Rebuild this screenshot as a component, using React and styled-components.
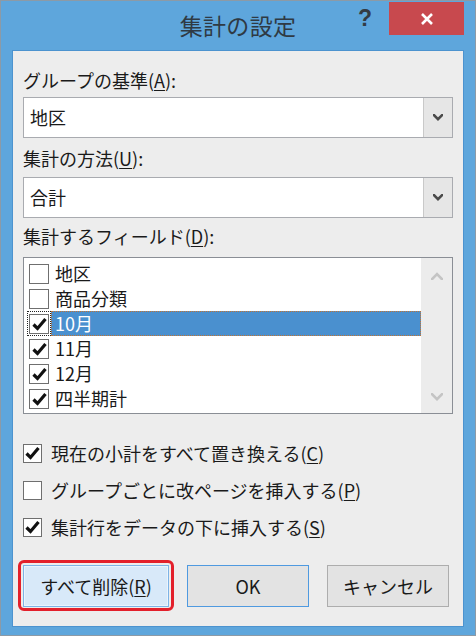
import React from 'react';
import styled, { createGlobalStyle } from 'styled-components';

const GlobalStyle = createGlobalStyle`
  html, body {
    margin: 0;
    padding: 0;
    background: #ffffff;
  }
  body {
    font-family: "Noto Sans CJK JP", "Noto Sans", sans-serif;
    color: #1a1a1a;
  }
`;

const fields = [
	{ name: '地区', checked: false },
	{ name: '商品分類', checked: false },
	{ name: '10月', checked: true, selected: true },
	{ name: '11月', checked: true },
	{ name: '12月', checked: true },
	{ name: '四半期計', checked: true },
];

const options = [
	{ text: '現在の小計をすべて置き換える', key: 'C', checked: true },
	{ text: 'グループごとに改ページを挿入する', key: 'P', checked: false },
	{ text: '集計行をデータの下に挿入する', key: 'S', checked: true },
];

const Chevron = ({ up, color = '#4a4a4a', size = 10, weight = 3 }) => (
	<svg width={size} height={size * 0.7} viewBox="0 0 12 8">
		<polyline
			points={up ? '1,7 6,2 11,7' : '1,1 6,6 11,1'}
			fill="none"
			stroke={color}
			strokeWidth={weight}
			strokeLinecap="square"
		/>
	</svg>
);

const Check = () => (
	<svg width="15" height="14" viewBox="0 0 15 14">
		<path d="M1.5 7.5 L5.5 11.5 L13.5 2" fill="none" stroke="#111" strokeWidth="3.2" />
	</svg>
);

const CheckBox = ({ checked, size }) => (
	<Box $size={size}>{checked && <Check />}</Box>
);

const Combo = ({ value }) => (
	<ComboBox>
		<ComboValue>{value}</ComboValue>
		<ComboButton>
			<Chevron />
		</ComboButton>
	</ComboBox>
);

const App = () => {
	return (
		<>
			<GlobalStyle />
			<Window>
				<TitleBar>
					<span />
					<Title>集計の設定</Title>
					<Controls>
						<Help>?</Help>
						<Close>
							<svg width="16" height="16" viewBox="0 0 16 16">
								<path d="M3 3 L13 13 M13 3 L3 13" stroke="#fff" strokeWidth="2.6" />
							</svg>
						</Close>
					</Controls>
				</TitleBar>
				<Client>
					<Label>グループの基準(<u>A</u>):</Label>
					<ComboSlot $top={5}>
						<Combo value="地区" />
					</ComboSlot>
					<Label $top={8}>集計の方法(<u>U</u>):</Label>
					<ComboSlot $top={7}>
						<Combo value="合計" />
					</ComboSlot>
					<Label $top={6}>集計するフィールド(<u>D</u>):</Label>
					<ListBox>
						<Rows>
							{fields.map((f) => (
								<Row key={f.name}>
									<CheckCell $focus={f.selected}>
										<CheckBox checked={f.checked} size={20} />
									</CheckCell>
									<RowLabel $selected={f.selected}>{f.name}</RowLabel>
								</Row>
							))}
						</Rows>
						<ScrollTrack>
							<Chevron up color="#c4c4c4" size={12} weight={2.6} />
							<Chevron color="#c4c4c4" size={12} weight={2.6} />
						</ScrollTrack>
					</ListBox>
					<Options>
						{options.map((o) => (
							<Option key={o.key}>
								<CheckBox checked={o.checked} size={19} />
								<span>
									{o.text}(<u>{o.key}</u>)
								</span>
							</Option>
						))}
					</Options>
					<Buttons>
						<Button $width={146} $variant="focus">
							すべて削除(<u>R</u>)
						</Button>
						<Button $width={122} $variant="default">OK</Button>
						<Button $width={122}>キャンセル</Button>
					</Buttons>
				</Client>
			</Window>
		</>
	);
};

export default App;

const Window = styled.div`
    width: 476px;
    height: 636px;
    box-sizing: border-box;
    border: 1px solid #8c9aa6;
    background: #5ea6dc;
    display: flex;
    flex-direction: column;
`

const TitleBar = styled.div`
    height: 49px;
    display: grid;
    grid-template-columns: 1fr auto 1fr;
    align-items: start;
`

const Title = styled.div`
    font-size: 23px;
    line-height: 49px;
    color: #2f3a44;
    letter-spacing: 0.3px;
`

const Controls = styled.div`
    display: flex;
    justify-content: flex-end;
    align-items: flex-start;
    gap: 17px;
    padding-right: 11px;
    padding-top: 1px;
`

const Help = styled.div`
    font-family: "Liberation Sans", sans-serif;
    font-weight: bold;
    font-size: 23px;
    line-height: 33px;
    color: #333b44;
`

const Close = styled.div`
    width: 75px;
    height: 33px;
    background: #c8494e;
    display: flex;
    align-items: center;
    justify-content: center;
`

const Client = styled.div`
    margin: 0 11px 8px 11px;
    flex: 1;
    background: #ededed;
    border: 1px solid #4c93cf;
    padding: 17px 10px 0 10px;
    display: flex;
    flex-direction: column;
`

const Label = styled.div`
    font-size: 18px;
    line-height: 24px;
    margin-top: ${(p) => p.$top || 0}px;
    u { text-underline-offset: 2px; }
`

const ComboSlot = styled.div`
    margin-top: ${(p) => p.$top}px;
`

const ComboBox = styled.div`
    height: 41px;
    box-sizing: border-box;
    border: 1px solid #a9abb0;
    background: #ffffff;
    display: flex;
`

const ComboValue = styled.div`
    flex: 1;
    font-size: 18px;
    line-height: 39px;
    padding-left: 6px;
`

const ComboButton = styled.div`
    width: 28px;
    border-left: 1px solid #c9c9c9;
    background: #e6e6e6;
    display: flex;
    align-items: center;
    justify-content: center;
`

const ListBox = styled.div`
    margin-top: 9px;
    height: 157px;
    box-sizing: border-box;
    border: 1px solid #8a8e95;
    background: #ffffff;
    display: grid;
    grid-template-columns: 1fr 31px;
`

const Rows = styled.div`
    padding: 3px 0 0 3px;
    display: flex;
    flex-direction: column;
`

const Row = styled.div`
    height: 25px;
    display: flex;
`

const CheckCell = styled.div`
    width: 24px;
    box-sizing: border-box;
    display: flex;
    align-items: center;
    justify-content: center;
    border: 1px dotted ${(p) => (p.$focus ? '#222' : 'transparent')};
`

const RowLabel = styled.div`
    flex: 1;
    box-sizing: border-box;
    font-size: 18px;
    line-height: 23px;
    padding-left: 3px;
    color: ${(p) => (p.$selected ? '#ffffff' : '#1a1a1a')};
    background: ${(p) => (p.$selected ? '#4a90cf' : 'transparent')};
    border: 1px dotted ${(p) => (p.$selected ? '#c27433' : 'transparent')};
`

const ScrollTrack = styled.div`
    background: #ececec;
    display: flex;
    flex-direction: column;
    justify-content: space-between;
    align-items: center;
    padding: 14px 0 12px;
`

const Box = styled.span`
    width: ${(p) => p.$size}px;
    height: ${(p) => p.$size}px;
    box-sizing: border-box;
    border: 1px solid #6f6f6f;
    background: #ffffff;
    display: inline-flex;
    align-items: center;
    justify-content: center;
    flex-shrink: 0;
`

const Options = styled.div`
    margin-top: 27px;
    display: flex;
    flex-direction: column;
    gap: 13px;
`

const Option = styled.div`
    display: flex;
    align-items: center;
    gap: 9px;
    font-size: 18px;
    line-height: 24px;
    u { text-underline-offset: 2px; }
`

const Buttons = styled.div`
    margin-top: 26px;
    display: flex;
    gap: 18px;
`

const Button = styled.div`
    position: relative;
    width: ${(p) => p.$width}px;
    height: 42px;
    box-sizing: border-box;
    font-size: 18px;
    display: flex;
    align-items: center;
    justify-content: center;
    border: 1px solid ${(p) =>
		p.$variant === 'focus' ? '#7db3e6' : p.$variant === 'default' ? '#4f9ae0' : '#adadad'};
    background: ${(p) => (p.$variant === 'focus' ? '#d8e9f9' : '#e3e3e3')};
    box-shadow: ${(p) => (p.$variant === 'focus' ? 'inset 0 0 0 1px #eaf4fd' : 'none')};
    u { text-underline-offset: 2px; }

    ${(p) =>
		p.$variant === 'focus' &&
		`
    &::after {
        content: '';
        position: absolute;
        inset: -6px -6px -5px -6px;
        border: 3px solid #e3202b;
        border-radius: 6px;
    }
    `}
`
